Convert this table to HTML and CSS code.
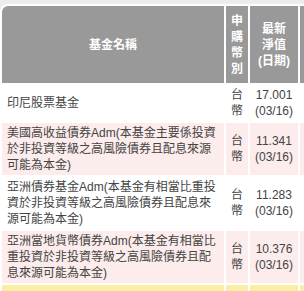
FILE: index.html
```html
<!DOCTYPE html>
<html lang="zh-Hant">
<head>
<meta charset="utf-8">
<link rel="stylesheet" href="styles.css">
</head>
<body>
<div class="page">
<table class="funds">
  <colgroup>
    <col class="c-name"><col class="c-cur"><col class="c-nav"><col class="c-more">
  </colgroup>
  <thead>
    <tr>
      <th class="h-name">基金名稱</th>
      <th class="h-cur">申<br>購<br>幣<br>別</th>
      <th class="h-nav">最新<br>淨值<br>(日期)</th>
      <th class="h-more"></th>
    </tr>
  </thead>
  <tbody>
    <tr>
      <td class="name">印尼股票基金</td>
      <td class="cur">台<br>幣</td>
      <td class="nav">17.001<br>(03/16)</td>
      <td></td>
    </tr>
    <tr class="alt">
      <td class="name">美國高收益債券Adm(本基金主要係投資<br>於非投資等級之高風險債券且配息來源<br>可能為本金)</td>
      <td class="cur">台<br>幣</td>
      <td class="nav">11.341<br>(03/16)</td>
      <td></td>
    </tr>
    <tr>
      <td class="name">亞洲債券基金Adm(本基金有相當比重投<br>資於非投資等級之高風險債券且配息來<br>源可能為本金)</td>
      <td class="cur">台<br>幣</td>
      <td class="nav">11.283<br>(03/16)</td>
      <td></td>
    </tr>
    <tr class="alt">
      <td class="name">亞洲當地貨幣債券Adm(本基金有相當比<br>重投資於非投資等級之高風險債券且配<br>息來源可能為本金)</td>
      <td class="cur">台<br>幣</td>
      <td class="nav">10.376<br>(03/16)</td>
      <td></td>
    </tr>
    <tr class="hl">
      <td class="name">&nbsp;</td>
      <td class="cur">&nbsp;</td>
      <td class="nav">&nbsp;</td>
      <td></td>
    </tr>
  </tbody>
</table>
</div>
</body>
</html>
```

FILE: styles.css
```css
html, body {
  margin: 0;
  padding: 0;
  overflow: hidden;
  background: #ececec;
}

.page {
  padding-top: 4px;
  width: 304px;
  height: 291px;
  box-sizing: border-box;
  overflow: hidden;
}

.funds {
  table-layout: fixed;
  width: 360px;
  border-collapse: separate;
  border-spacing: 2px;
  background: #ffffff;
  border-top-left-radius: 8px;
  font-family: "Liberation Sans", "Noto Sans CJK TC", sans-serif;
  font-size: 12px;
  line-height: 16px;
  color: #444444;
}

.c-name { width: 222px; }
.c-cur { width: 22px; }
.c-nav { width: 48px; }
.c-more { width: 60px; }

.funds th {
  background: #999999;
  color: #ffffff;
  font-weight: bold;
  text-align: center;
  vertical-align: middle;
  padding: 0;
  height: 77px;
  box-sizing: border-box;
}

.funds th.h-name {
  border-top-left-radius: 6px;
}

.funds td {
  padding: 2px 0;
  vertical-align: middle;
  background: #ffffff;
}

.funds td.name {
  padding-left: 5px;
  padding-right: 2px;
  white-space: nowrap;
}

.funds td.cur,
.funds td.nav {
  text-align: center;
}

.funds tr.alt td {
  background: #fcecec;
}

.funds tr.hl td {
  background: #fbeea2;
}
```
